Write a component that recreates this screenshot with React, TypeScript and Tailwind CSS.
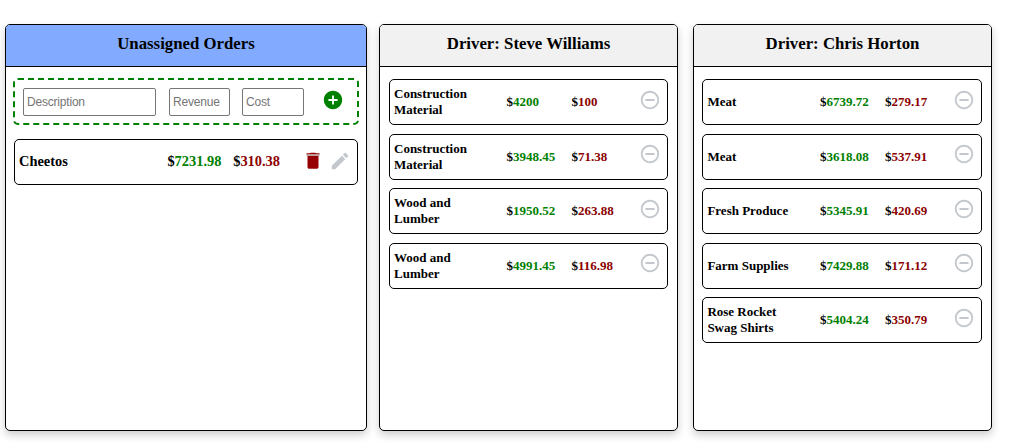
import type { ReactNode } from 'react';
import { MdAddCircle, MdRemoveCircleOutline, MdEdit } from 'react-icons/md';

type Order = { name: string; revenue: string; cost: string };

const steve: Order[] = [
  { name: 'Construction Material', revenue: '4200', cost: '100' },
  { name: 'Construction Material', revenue: '3948.45', cost: '71.38' },
  { name: 'Wood and Lumber', revenue: '1950.52', cost: '263.88' },
  { name: 'Wood and Lumber', revenue: '4991.45', cost: '116.98' },
];

const chris: Order[] = [
  { name: 'Meat', revenue: '6739.72', cost: '279.17' },
  { name: 'Meat', revenue: '3618.08', cost: '537.91' },
  { name: 'Fresh Produce', revenue: '5345.91', cost: '420.69' },
  { name: 'Farm Supplies', revenue: '7429.88', cost: '171.12' },
  { name: 'Rose Rocket Swag Shirts', revenue: '5404.24', cost: '350.79' },
];

function Column({ title, size, head, children }: { title: string; size: string; head: string; children: ReactNode }) {
  return (
    <section className={`flex h-[407px] shrink-0 flex-col overflow-hidden rounded-[5px] border border-black bg-white shadow-[0_4px_8px_0_rgba(0,0,0,0.2)] ${size}`}>
      <h3 className={`h-[42px] shrink-0 border-b border-black pt-[8px] text-center text-[16.8px] leading-[22px] font-bold ${head}`}>{title}</h3>
      {children}
    </section>
  );
}

function Money({ value, color, className }: { value: string; color: string; className: string }) {
  return (
    <span className={`shrink-0 ${className}`}>
      $<span className={color}>{value}</span>
    </span>
  );
}

function TrashIcon() {
  return (
    <svg className="mb-[2px] shrink-0" width="22" height="22" viewBox="0 0 22 22">
      <path d="M4.5 3.2H8l.7-.4h4.6l.7.4h3.5v1.3h-13z" fill="#960000" />
      <path d="M4.5 4.5h13V6h-13z" fill="#b9a3a3" />
      <path d="M5.5 6h11v10.9c0 1-.8 1.8-1.8 1.8H7.3c-1 0-1.8-.8-1.8-1.8z" fill="#960000" />
    </svg>
  );
}

function DriverOrders({ orders, className }: { orders: Order[]; className: string }) {
  return (
    <div className={`flex flex-col gap-[8.5px] pt-[12.25px] ${className}`}>
      {orders.map((o, i) => (
        <div key={i} className="flex h-[46px] items-center rounded-[5px] border border-black pl-1 text-[13px] leading-4 font-bold">
          <span className="w-[112.5px] shrink-0 pr-6">{o.name}</span>
          <Money value={o.revenue} color="text-[#008000]" className="w-[65px]" />
          <Money value={o.cost} color="text-[#8b0000]" className="w-[67.7px]" />
          <MdRemoveCircleOutline className="mb-[5px] shrink-0 text-[#c4c8cc]" size={22} />
        </div>
      ))}
    </div>
  );
}

const field = 'h-7 rounded-[2px] border border-[#767676] bg-white px-[3px] font-["Liberation_Sans",Arial,sans-serif] text-[12px] tracking-[-0.2px] placeholder:text-[#757575]';

export default function App() {
  return (
    <main className='flex h-[445px] items-start overflow-hidden bg-white pt-6 pl-[5px] font-["Liberation_Serif","Times_New_Roman",serif] text-black'>
      <Column title="Unassigned Orders" size="w-[362px]" head="bg-[#82abff]">
        <form className="mt-[11px] ml-[7px] flex h-[47px] w-[346px] items-center rounded-[5px] border-2 border-dashed border-[#008000] pl-2">
          <input placeholder="Description" className={`w-[133px] ${field}`} />
          <input placeholder="Revenue" className={`ml-[13px] w-[61px] ${field}`} />
          <input placeholder="Cost" className={`ml-3 w-[62px] ${field}`} />
          <MdAddCircle className="mb-[3px] ml-[18px] text-[#008000]" size={22} />
        </form>
        <div className="mt-[14px] ml-2 flex h-[46px] w-[344px] items-center rounded-[5px] border border-black pl-1 text-[14.4px] leading-4 font-bold">
          <span className="mb-[2px] w-[148.4px]">Cheetos</span>
          <Money value="7231.98" color="text-[#008000]" className="mb-[2px] w-[65.8px]" />
          <Money value="310.38" color="text-[#8b0000]" className="mb-[2px] w-[68.8px]" />
          <TrashIcon />
          <MdEdit className="mb-[2px] ml-[5px] text-[#c4c8cc]" size={22} />
        </div>
      </Column>
      <Column title="Driver: Steve Williams" size="ml-3 w-[299px]" head="bg-[#f1f1f1]">
        <DriverOrders orders={steve} className="ml-[9px] w-[279px]" />
      </Column>
      <Column title="Driver: Chris Horton" size="ml-[15px] w-[299px]" head="bg-[#f1f1f1]">
        <DriverOrders orders={chris} className="ml-[8.4px] w-[279.6px]" />
      </Column>
    </main>
  );
}
